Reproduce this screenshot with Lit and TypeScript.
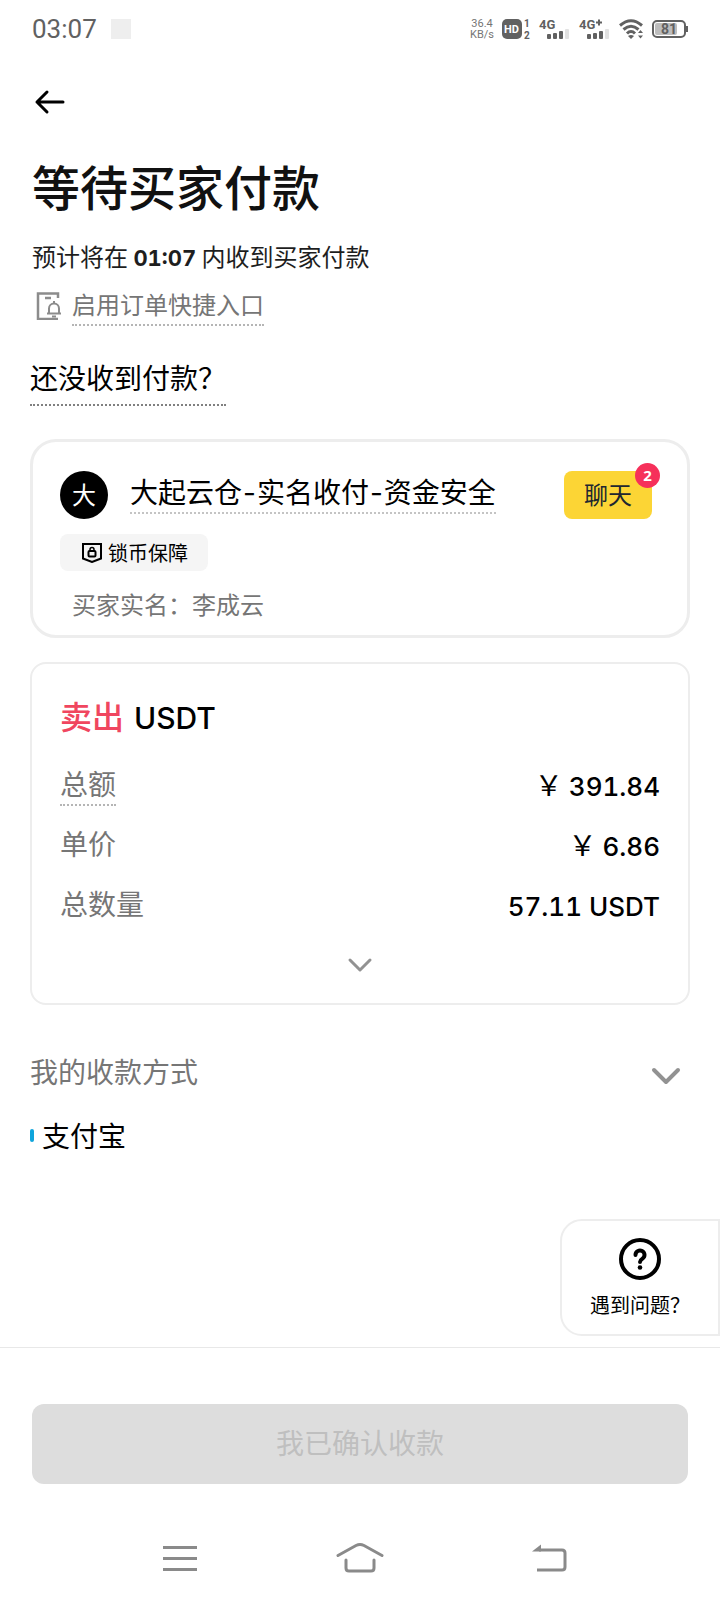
import { LitElement, html, css, svg } from "lit";
import { customElement, property } from "lit/decorators.js";

const signalBars = svg`
  <rect x="8" y="15" width="4" height="5" rx="1" />
  <rect x="14" y="14" width="4" height="6" rx="1" />
  <rect x="20" y="12" width="4" height="8" rx="1" />
  <rect x="26" y="10" width="4" height="10" rx="1" fill="#e2e2e2" />
`;

@customElement("status-bar")
class StatusBar extends LitElement {
  @property() time = "";

  static styles = css`
    :host {
      display: flex;
      align-items: center;
      justify-content: space-between;
      height: 58px;
      padding: 0 32px;
      color: #616161;
      font-family: Roboto, sans-serif;
    }
    .left {
      display: flex;
      align-items: center;
      gap: 14px;
      font-size: 26px;
      line-height: 30px;
    }
    .dot {
      width: 20px;
      height: 20px;
      background: #eee;
    }
    .right {
      display: flex;
      align-items: center;
      gap: 8px;
    }
    .rate {
      color: #757575;
      font-size: 11px;
      line-height: 11px;
      text-align: center;
    }
    svg {
      display: block;
      overflow: visible;
      fill: currentColor;
    }
    text {
      font-family: Roboto, sans-serif;
      font-weight: 700;
    }
  `;

  render() {
    return html`
      <div class="left"><span>${this.time}</span><span class="dot"></span></div>
      <div class="right">
        <div class="rate">36.4<br />KB/s</div>
        <svg width="29" height="22" viewBox="0 0 29 22">
          <rect x="0" y="1" width="20" height="20" rx="5" />
          <text x="2" y="15" font-size="11" fill="#fff">HD</text>
          <text x="22" y="9" font-size="10">1</text>
          <text x="22" y="21" font-size="10">2</text>
        </svg>
        <svg width="32" height="24" viewBox="0 0 32 24">
          <text x="0" y="12" font-size="13">4G</text>
          <g transform="translate(0,2)">${signalBars}</g>
        </svg>
        <svg width="32" height="24" viewBox="0 0 32 24">
          <text x="0" y="12" font-size="13">4G</text>
          <path d="M17 5.500h6M20 2.500v6" stroke="currentColor" stroke-width="2" />
          <g transform="translate(0,2)">${signalBars}</g>
        </svg>
        <svg width="25" height="22" viewBox="0 0 25 22">
          <g fill="none" stroke="currentColor" stroke-width="3">
            <path d="M1 7.500Q12 -2 23 7.500" />
            <path d="M4.500 11.500Q12 5 19.500 11.500" />
            <path d="M8 15.500Q12 11.500 16 15.500" />
          </g>
          <path d="M9 18q3-2 6 0l-3 3z" />
          <path d="M21.500 12l2.500 3h-5zM21.500 20.500l2.500-3h-5z" />
        </svg>
        <svg width="36" height="20" viewBox="0 0 36 20">
          <rect x="1" y="2" width="32" height="16" rx="4" fill="none" stroke="currentColor" stroke-width="2" />
          <rect x="3" y="4" width="22" height="12" rx="2" fill="#bdbdbd" />
          <rect x="34" y="7" width="2" height="6" />
          <text x="17" y="15" font-size="14" text-anchor="middle">81</text>
        </svg>
      </div>
    `;
  }
}

@customElement("buyer-card")
class BuyerCard extends LitElement {
  @property() realName = "";
  @property({ type: Number }) unread = 0;

  static styles = css`
    :host {
      display: flex;
      flex-direction: column;
      align-items: stretch;
      padding: 29px 35px 12px 27px;
      border: 3px solid #ededed;
      border-radius: 26px;
    }
    .head {
      display: flex;
      align-items: center;
    }
    .avatar {
      flex: none;
      width: 48px;
      height: 48px;
      border-radius: 50%;
      background: #000;
      color: #fff;
      font-size: 24px;
      line-height: 46px;
      text-align: center;
    }
    .name {
      margin: 0 0 4px 22px;
      color: #000;
      font-size: 28px;
      line-height: 38px;
      text-decoration: none;
      border-bottom: 2px dotted #c4c4c4;
    }
    .dash {
      margin: 0 1px;
      font-family: Inter, sans-serif;
    }
    .chat {
      position: relative;
      margin-left: auto;
      width: 88px;
      height: 48px;
      padding: 0 0 2px;
      border: 0;
      border-radius: 8px;
      background: #fcd535;
      color: #202630;
      font: inherit;
      font-size: 24px;
      line-height: 46px;
    }
    .badge {
      position: absolute;
      top: -8px;
      right: -8px;
      width: 25px;
      height: 25px;
      border-radius: 50%;
      background: #f6305a;
      color: #fff;
      font: 700 15px/25px "Open Sans", sans-serif;
      text-align: center;
    }
    .tag {
      display: flex;
      align-items: center;
      align-self: flex-start;
      gap: 6px;
      margin-top: 15px;
      padding: 0 20px 0 22px;
      height: 37px;
      border-radius: 8px;
      background: #f5f5f5;
      color: #000;
      font-size: 20px;
      line-height: 36px;
    }
    .tag svg {
      display: block;
    }
    .real {
      margin: 14px 0 0 12px;
      color: #767676;
      font-size: 24px;
      line-height: 38px;
    }
  `;

  render() {
    return html`
      <div class="head">
        <span class="avatar">大</span>
        <a class="name" href="#merchant"
          >大起云仓<span class="dash">-</span>实名收付<span class="dash">-</span>资金安全</a
        >
        <button class="chat" type="button">聊天<span class="badge">${this.unread}</span></button>
      </div>
      <div class="tag">
        <svg width="20" height="20" viewBox="0 0 20 20" fill="none" stroke="#000" stroke-width="2">
          <path d="M1 1h18v14.500L10 19l-9-3.500z" />
          <rect x="6.500" y="8" width="7" height="5.500" rx="1" />
          <path d="M8 8V6.500a2 2 0 0 1 4 0V8" stroke-width="1.500" />
        </svg>
        <span>锁币保障</span>
      </div>
      <div class="real">买家实名：${this.realName}</div>
    `;
  }
}

interface Row {
  label: string;
  currency?: string;
  value: string;
  hint?: boolean;
}

@customElement("order-card")
class OrderCard extends LitElement {
  @property({ attribute: false }) rows: Row[] = [];

  static styles = css`
    :host {
      display: block;
      padding: 27px 28px 20px;
      border: 2px solid #ededed;
      border-radius: 16px;
    }
    .title {
      display: flex;
      align-items: baseline;
      gap: 10px;
      margin: 0;
      font-weight: 500;
      font-size: 32px;
      line-height: 48px;
      color: #000;
    }
    .side {
      color: #f0465f;
    }
    .coin {
      font-family: Inter, sans-serif;
      font-size: 30px;
    }
    dl {
      display: grid;
      gap: 18px;
      margin: 22px 0 0;
    }
    .row {
      display: flex;
      justify-content: space-between;
      height: 42px;
      font-size: 28px;
      line-height: 39px;
    }
    dt {
      align-self: flex-start;
      color: #767676;
    }
    .hint {
      padding-bottom: 1px;
      border-bottom: 2px dotted #b5b5b5;
    }
    dd {
      display: flex;
      align-items: baseline;
      align-self: flex-end;
      gap: 6px;
      margin: 0;
      color: #000;
    }
    .num {
      font-family: Inter, sans-serif;
      font-weight: 500;
      font-size: 26px;
      font-variant-numeric: tabular-nums;
    }
    .more {
      display: block;
      margin: 21px auto 0;
      padding: 10px;
      border: 0;
      background: none;
    }
    .more svg {
      display: block;
    }
  `;

  render() {
    return html`
      <h2 class="title"><span class="side">卖出</span><span class="coin">USDT</span></h2>
      <dl>
        ${this.rows.map(
          (r) => html`
            <div class="row">
              <dt class=${r.hint ? "hint" : ""}>${r.label}</dt>
              <dd>
                ${r.currency ? html`<span>${r.currency}</span>` : ""}
                <span class="num">${r.value}</span>
              </dd>
            </div>
          `
        )}
      </dl>
      <button class="more" type="button" aria-label="展开">
        <svg width="26" height="16" viewBox="0 0 26 16" fill="none" stroke="#929292" stroke-width="3">
          <path d="M3 3l10 10L23 3" stroke-linejoin="round" stroke-linecap="round" />
        </svg>
      </button>
    `;
  }
}

@customElement("app-root")
class AppRoot extends LitElement {
  static styles = css`
    :host {
      display: flex;
      flex-direction: column;
      min-height: 100vh;
      background: #fff;
      color: #000;
      font-family: "Noto Sans CJK SC", sans-serif;
    }
    button {
      padding: 0;
      border: 0;
      background: none;
      font: inherit;
    }
    svg {
      display: block;
    }
    main {
      position: relative;
      flex: 1;
      padding: 0 30px;
    }
    .back {
      margin: 29px 0 34px 4px;
    }
    h1 {
      margin: 0 0 15px 2px;
      color: #111;
      font-weight: 500;
      font-size: 48px;
      line-height: 72px;
    }
    .eta {
      margin: 0 0 8px 2px;
      color: #1e1e1e;
      font-size: 24px;
      line-height: 40px;
    }
    .eta b {
      font-family: Inter, sans-serif;
      font-weight: 700;
      font-size: 22px;
      font-variant-numeric: tabular-nums;
    }
    .shortcut {
      display: flex;
      align-items: center;
      gap: 10px;
      margin-left: 6px;
    }
    .shortcut a {
      padding-bottom: 2px;
      color: #767676;
      font-size: 24px;
      line-height: 36px;
      text-decoration: none;
      border-bottom: 2px dotted #b5b5b5;
    }
    .unpaid {
      display: inline-block;
      margin-top: 27px;
      padding-bottom: 3px;
      color: #000;
      font-size: 28px;
      line-height: 48px;
      text-decoration: none;
      border-bottom: 2px dotted #808080;
    }
    buyer-card {
      margin-top: 33px;
    }
    order-card {
      margin-top: 24px;
    }
    .methods {
      display: flex;
      align-items: center;
      justify-content: space-between;
      margin: 46px 0 0;
      padding-right: 9px;
      color: #767676;
      font-weight: 400;
      font-size: 28px;
      line-height: 40px;
    }
    .methods h2 {
      margin: 0;
      font: inherit;
    }
    .methods button {
      padding-top: 10px;
    }
    .method {
      display: flex;
      align-items: center;
      gap: 8px;
      margin-top: 24px;
      font-size: 28px;
      line-height: 40px;
    }
    .mark {
      width: 4px;
      height: 13px;
      border-radius: 2px;
      background: #0fa5dc;
    }
    .help {
      position: absolute;
      right: 0;
      bottom: 11px;
      display: flex;
      flex-direction: column;
      align-items: center;
      gap: 10px;
      padding: 17px 28px 14px;
      border: 2px solid #ededed;
      border-radius: 22px 0 0 22px;
      background: #fff;
      color: #000;
      font-size: 20px;
      line-height: 30px;
    }
    footer {
      border-top: 1px solid #e8e8e8;
      padding: 56px 32px 0;
    }
    .confirm {
      display: block;
      width: 100%;
      height: 80px;
      padding-bottom: 4px;
      border-radius: 12px;
      background: #ddd;
      color: #bfbfbf;
      font-size: 28px;
      line-height: 40px;
    }
    .nav {
      box-sizing: border-box;
      display: grid;
      grid-template-columns: repeat(3, 180px);
      justify-content: center;
      align-items: center;
      justify-items: center;
      height: 116px;
      padding-top: 32px;
    }
    .nav svg {
      fill: none;
      stroke: #8a8a8a;
      stroke-width: 3;
    }
  `;

  private rows: Row[] = [
    { label: "总额", currency: "￥", value: "391.84", hint: true },
    { label: "单价", currency: "￥", value: "6.86" },
    { label: "总数量", value: "57.11 USDT" },
  ];

  render() {
    return html`
      <status-bar time="03:07"></status-bar>
      <main>
        <button class="back" type="button" aria-label="返回">
          <svg width="32" height="28" viewBox="0 0 32 28" fill="none" stroke="#000" stroke-width="3" stroke-linecap="round" stroke-linejoin="round">
            <path d="M29 15H3M13 5L3 15l10 10" />
          </svg>
        </button>
        <h1>等待买家付款</h1>
        <p class="eta">预计将在 <b>01:07</b> 内收到买家付款</p>
        <div class="shortcut">
          <svg width="26" height="28" viewBox="0 0 26 28" fill="none" stroke="#8c8c8c" stroke-width="2.500">
            <path d="M22 6V1.500H2V27h20M9 6h6" />
            <path d="M11 21.500h14M13 21.500v-5a5 5 0 0 1 10 0v5M16 24.500h4M18 9v2.500" stroke-width="2" />
          </svg>
          <a href="#shortcut">启用订单快捷入口</a>
        </div>
        <a class="unpaid" href="#unpaid">还没收到付款？</a>
        <buyer-card realName="李成云" .unread=${2}></buyer-card>
        <order-card .rows=${this.rows}></order-card>
        <div class="methods">
          <h2>我的收款方式</h2>
          <button type="button" aria-label="展开收款方式">
            <svg width="30" height="20" viewBox="0 0 30 20" fill="none" stroke="#929292" stroke-width="4">
              <path d="M3 4l12 12L27 4" stroke-linecap="round" stroke-linejoin="round" />
            </svg>
          </button>
        </div>
        <div class="method"><span class="mark"></span><span>支付宝</span></div>
        <button class="help" type="button">
          <svg width="42" height="42" viewBox="0 0 42 42" fill="none" stroke="#000" stroke-width="4" stroke-linecap="round">
            <circle cx="21" cy="21" r="19" />
            <path d="M16.500 17a4.500 4.500 0 1 1 7 3.700Q21 22.300 21 24" stroke-linejoin="round" />
            <circle cx="21" cy="29.500" r="2.300" fill="#000" stroke="none" />
          </svg>
          <span>遇到问题？</span>
        </button>
      </main>
      <footer>
        <button class="confirm" type="button" disabled>我已确认收款</button>
        <nav class="nav">
          <button type="button" aria-label="菜单">
            <svg width="34" height="28" viewBox="0 0 34 28"><path d="M0 3.500h34M0 14.500h34M0 25.500h34" /></svg>
          </button>
          <button type="button" aria-label="主页">
            <svg width="48" height="32" viewBox="0 0 48 32" stroke-linecap="round">
              <path d="M2 13.500L20 3.500q4-2 8 0L46 13.500M10 18v8q0 3 3 3h22q3 0 3-3v-8" />
            </svg>
          </button>
          <button type="button" aria-label="后退">
            <svg width="54" height="30" viewBox="-18 0 54 30">
              <path d="M8 7h23q3 0 3 3v14q0 3-3 3H6" />
              <path d="M1 8.500L10 1.500v7z" fill="#8a8a8a" stroke="none" />
            </svg>
          </button>
        </nav>
      </footer>
    `;
  }
}
